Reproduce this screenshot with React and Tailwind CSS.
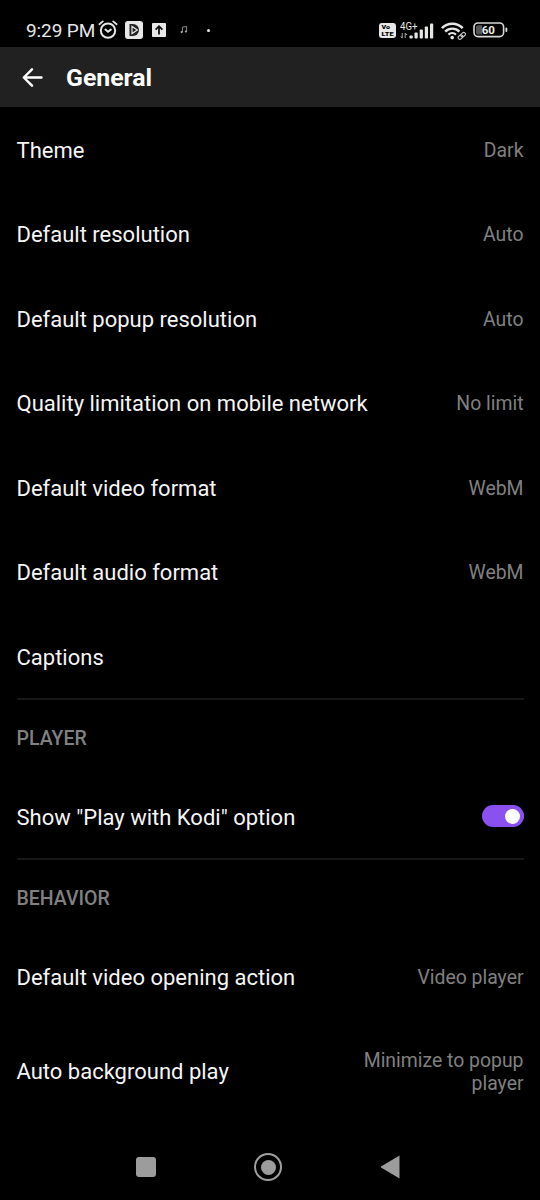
const general = [
  { label: 'Theme', value: 'Dark' },
  { label: 'Default resolution', value: 'Auto' },
  { label: 'Default popup resolution', value: 'Auto' },
  { label: 'Quality limitation on mobile network', value: 'No limit' },
  { label: 'Default video format', value: 'WebM' },
  { label: 'Default audio format', value: 'WebM' },
  { label: 'Captions' },
]

function AlarmIcon() {
  return (
    <svg width="20" height="20" viewBox="0 0 20 20" fill="none" stroke="#e6e6e6" strokeLinecap="round">
      <circle cx="10" cy="10.6" r="7.2" strokeWidth="2" />
      <path d="M7.4 9.6 10 11.8l2.8-2.2" strokeWidth="2" />
      <path d="M1.4 4.2 4.8 1.4M18.6 4.2 15.2 1.4" strokeWidth="1.8" />
    </svg>
  )
}

function PlayBoxIcon() {
  return (
    <svg width="18" height="18" viewBox="0 0 18 18">
      <rect width="18" height="18" rx="3" fill="#e8e8e8" />
      <path d="M4.5 3v12H8a6 6 0 0 0 0-12z" fill="#222" />
      <path d="M7 5.4v7.2L12.4 9z" fill="none" stroke="#e8e8e8" strokeWidth="1.2" />
    </svg>
  )
}

function UploadIcon() {
  return (
    <svg width="14" height="14" viewBox="0 0 14 14">
      <rect width="14" height="14" rx="1" fill="#e8e8e8" />
      <path d="M7 11.5V4M3.6 6.6 7 3.2l3.4 3.4" fill="none" stroke="#111" strokeWidth="1.8" />
    </svg>
  )
}

function NoteIcon() {
  return (
    <svg width="8" height="8" viewBox="0 0 8 8" fill="#aaa">
      <path d="M2.4 6V1.2l4.2-.7v4.9" fill="none" stroke="#aaa" strokeWidth=".8" />
      <circle cx="1.7" cy="6.1" r="1.1" />
      <circle cx="5.9" cy="5.5" r="1.1" />
    </svg>
  )
}

function VolteIcon() {
  return (
    <svg width="17" height="15" viewBox="0 0 17 15" fontFamily="Roboto, sans-serif" fontWeight="900" fontSize="5.8">
      <rect width="17" height="15" rx="3" fill="#e8e8e8" />
      <text x="2.5" y="6.4" textLength="8.5" lengthAdjust="spacingAndGlyphs">Vo</text>
      <text x="2.5" y="13.3" textLength="12" lengthAdjust="spacingAndGlyphs">LTE</text>
    </svg>
  )
}

function SignalIcon() {
  return (
    <svg width="34" height="20" viewBox="0 0 34 20" fill="#e6e6e6">
      <text x="0" y="8.5" fontFamily="Roboto, sans-serif" fontSize="10" textLength="17.5" lengthAdjust="spacingAndGlyphs">4G+</text>
      <path d="M2.2 12v5M.8 15.4l1.4 1.8M5.2 17v-5l1.8 2" fill="none" stroke="#aaa" strokeWidth="1" />
      <rect x="9.5" y="14.5" width="3.2" height="3" rx=".8" />
      <rect x="14.5" y="11.5" width="3.2" height="6" rx=".8" />
      <rect x="19.7" y="8.5" width="3.2" height="9" rx=".8" />
      <rect x="24.8" y="5.5" width="3.2" height="12" rx=".8" />
      <rect x="30" y="2.5" width="3.2" height="15" rx=".8" />
    </svg>
  )
}

function WifiIcon() {
  return (
    <svg width="25" height="18" viewBox="0 0 25 18" fill="none" stroke="#e6e6e6">
      <path d="M.9 6.2a14.4 14.4 0 0 1 20.8 0" strokeWidth="2.6" />
      <path d="M4.2 9.6a10 10 0 0 1 14.2 0" strokeWidth="2.4" />
      <path d="M7.4 12.6a5.6 5.6 0 0 1 7.6 0" strokeWidth="2.2" />
      <circle cx="11.2" cy="15.6" r="1.8" fill="#e6e6e6" stroke="none" />
      <g transform="rotate(-42 20.7 13.8)" strokeWidth="1.1" stroke="#ccc">
        <rect x="16.4" y="12.2" width="5" height="3.4" rx="1.7" />
        <rect x="20" y="12.2" width="5" height="3.4" rx="1.7" />
      </g>
    </svg>
  )
}

function BatteryIcon() {
  return (
    <svg width="36" height="16" viewBox="0 0 36 16">
      <rect x="1" y="1" width="29.6" height="13.6" rx="4" fill="none" stroke="#d8d8d8" strokeWidth="1.6" />
      <path d="M5 3.2h4v9.2H5a2 2 0 0 1-2-2V5.2a2 2 0 0 1 2-2z" fill="#555" />
      <rect x="32.4" y="5.6" width="1.9" height="4.4" rx=".9" fill="#d8d8d8" />
      <text x="15.3" y="12" textAnchor="middle" fontFamily="Roboto, sans-serif" fontWeight="700" fontSize="11.5" fill="#eee">60</text>
    </svg>
  )
}

function StatusBar() {
  return (
    <div className="h-[47px] pt-[14px] pl-[26px] pr-[31px] flex items-center shrink-0 text-[#e6e6e6]">
      <span className="w-[72px] text-[19px] leading-none tracking-[-0.1px] whitespace-nowrap">9:29 PM</span>
      <div className="-mt-px"><AlarmIcon /></div>
      <div className="ml-[7px] -mt-px"><PlayBoxIcon /></div>
      <div className="ml-[9px] -mt-px"><UploadIcon /></div>
      <div className="ml-[14px] -mt-px"><NoteIcon /></div>
      <div className="ml-[19px] -mt-px size-[3px] rounded-full bg-gray-200" />
      <div className="ml-auto"><VolteIcon /></div>
      <div className="ml-1"><SignalIcon /></div>
      <div className="ml-[7px]"><WifiIcon /></div>
      <div className="ml-[7px] -mt-px"><BatteryIcon /></div>
    </div>
  )
}

function Row({ label, value, children, tall }) {
  return (
    <div className={`flex items-center justify-between ${tall ? 'h-[104px]' : 'h-[84.5px]'}`}>
      <span className="text-[22px] leading-[26px] text-[#f5f5f5] whitespace-nowrap">{label}</span>
      {value && (
        <span className="max-w-[170px] -mt-px text-right text-[19.4px] leading-[23px] text-[#808080]">{value}</span>
      )}
      {children}
    </div>
  )
}

function SectionTitle({ children }) {
  return (
    <div className="-mt-[2px] h-[77.6px] pt-[2px] border-t-2 border-[#181818] flex items-center">
      <h2 className="text-[19.5px] leading-6 font-medium text-[#808080]">{children}</h2>
    </div>
  )
}

export default function App() {
  return (
    <div className="w-[540px] h-[1200px] bg-black flex flex-col overflow-hidden font-[Roboto,sans-serif]">
      <StatusBar />

      <header className="h-[60px] shrink-0 bg-[#212121] flex items-center pl-[22px] gap-[23px]">
        <svg width="21" height="20" viewBox="0 0 21 20" fill="none" stroke="#fff" strokeWidth="2.4" strokeLinecap="round" strokeLinejoin="round">
          <path d="M19.5 10.5H1.8M10 2.3l-8.2 8.2 8.2 8.2" />
        </svg>
        <h1 className="pt-[2px] text-[24.8px] leading-7 font-bold text-white">General</h1>
      </header>

      <main className="flex-1 px-[16.5px] pt-[1.4px]">
        {general.map(item => <Row key={item.label} {...item} />)}

        <SectionTitle>PLAYER</SectionTitle>
        <Row label={'Show "Play with Kodi" option'}>
          <div className="w-[42px] h-[22px] -mt-[3px] rounded-full bg-[#8b50f0] p-1 flex items-center justify-end">
            <div className="size-[15px] rounded-full bg-white" />
          </div>
        </Row>

        <SectionTitle>BEHAVIOR</SectionTitle>
        <Row label="Default video opening action" value="Video player" />
        <Row label="Auto background play" value="Minimize to popup player" tall />
      </main>

      {/* system navigation */}
      <nav className="h-[65px] shrink-0 flex items-start pt-[18px] pl-[136px]">
        <div className="size-5 mt-1 rounded-[3px] bg-[#9c9c9c]" />
        <div className="ml-[98px] size-7 rounded-full border-2 border-[#a0a0a0] flex items-center justify-center">
          <div className="size-[15px] rounded-full bg-[#9c9c9c]" />
        </div>
        <svg className="ml-[98px] mt-[2px]" width="20" height="24" viewBox="0 0 20 24" fill="#9c9c9c">
          <path d="M19.5.5v23L1 12.5q-.6-.5 0-1z" />
        </svg>
      </nav>
    </div>
  )
}
